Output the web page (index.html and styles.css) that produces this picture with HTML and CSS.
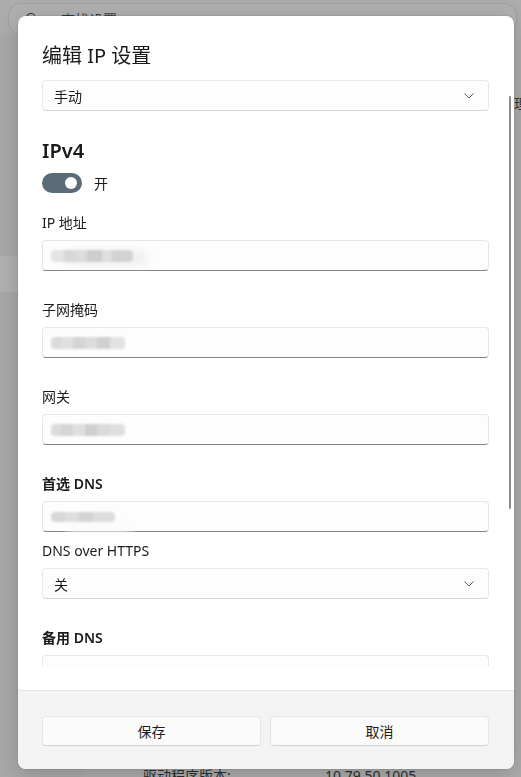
FILE: index.html
```html
<!DOCTYPE html>
<html lang="zh-CN">
<head>
<meta charset="utf-8">
<title>编辑 IP 设置</title>
<link rel="stylesheet" href="styles.css">
</head>
<body>
<div class="page">
  <div class="search">
    <svg class="search-icon" width="14" height="14" viewBox="0 0 14 14"><circle cx="8" cy="6" r="4.5" fill="none" stroke="#3a3a3a" stroke-width="1.2"/><path d="M4.8 9.2 1.5 12.5" stroke="#3a3a3a" stroke-width="1.2"/></svg>
    <span>查找设置</span>
  </div>
  <div class="page-body">
    <div class="nav"><div class="nav-sel"></div></div>
    <div class="main">
      <div class="side-row">理代理</div>
      <div class="driver"><span class="driver-key">驱动程序版本:</span><span>10.79.50.1005</span></div>
    </div>
  </div>
</div>

<div class="dialog">
  <div class="scroll">
    <div class="scroll-inner">
      <h1 class="title">编辑 IP 设置</h1>
      <div class="select first-select"><span>手动</span><svg class="chev" width="10" height="6" viewBox="0 0 10 6"><path d="M0.5 0.5 5 5 9.5 0.5" fill="none" stroke="#5c5c5c" stroke-width="1"/></svg></div>

      <h2 class="section">IPv4</h2>
      <div class="toggle-row"><span class="toggle"><span class="knob"></span></span><span>开</span></div>

      <div class="field first-field">
        <label class="label">IP 地址</label>
        <div class="input"><span class="redact r-ip"></span></div>
      </div>
      <div class="field">
        <label class="label">子网掩码</label>
        <div class="input"><span class="redact r-mask"></span></div>
      </div>
      <div class="field">
        <label class="label">网关</label>
        <div class="input"><span class="redact r-gw"></span></div>
      </div>
      <div class="field">
        <label class="label strong">首选 DNS</label>
        <div class="input"><span class="redact r-dns"></span></div>
      </div>
      <div class="field tight">
        <label class="label">DNS over HTTPS</label>
        <div class="select"><span>关</span><svg class="chev" width="10" height="6" viewBox="0 0 10 6"><path d="M0.5 0.5 5 5 9.5 0.5" fill="none" stroke="#5c5c5c" stroke-width="1"/></svg></div>
      </div>
      <div class="field">
        <label class="label strong">备用 DNS</label>
        <div class="input"></div>
      </div>
    </div>
    <div class="scrollbar"></div>
  </div>
  <div class="footer">
    <button class="btn">保存</button>
    <button class="btn">取消</button>
  </div>
</div>
</body>
</html>
```

FILE: styles.css
```css
* { box-sizing: border-box; }

body {
  margin: 0;
  width: 521px;
  height: 777px;
  overflow: hidden;
  background: #acacac;
  font-family: "Segoe UI", "Noto Sans", "Noto Sans CJK SC", sans-serif;
  color: #1b1b1b;
}

/* dimmed settings window behind */
.page {
  height: 777px;
  display: flex;
  flex-direction: column;
}

.search {
  margin: 3px 4px 0 8px;
  height: 32px;
  border: 1px solid #a0a0a0;
  border-radius: 13px;
  background: #b0b0b0;
  display: flex;
  align-items: center;
  gap: 24px;
  padding-left: 14px;
  font-size: 14px;
  color: #3a3a3a;
}

.page-body {
  flex: 1;
  display: flex;
}

.nav {
  width: 83px;
  background: #a9a9a9;
  padding-top: 221px;
}

.nav-sel {
  height: 36px;
  background: #b1b1b1;
}

.main {
  flex: 1;
  display: flex;
  flex-direction: column;
  overflow: hidden;
}

.side-row {
  margin-top: 59px;
  padding-left: 431px;
  font-size: 14px;
  line-height: 20px;
  color: #333;
  white-space: nowrap;
}

.driver {
  margin-top: auto;
  margin-bottom: -9px;
  display: flex;
  padding-left: 60px;
  font-size: 14px;
  line-height: 20px;
  color: #2e2e2e;
  white-space: nowrap;
}

.driver-key { width: 182px; }

/* dialog */
.dialog {
  position: fixed;
  left: 18px;
  top: 16px;
  width: 496px;
  height: 753px;
  background: #ffffff;
  border-radius: 8px;
  display: flex;
  flex-direction: column;
  overflow: hidden;
  box-shadow: 0 6px 24px rgba(0, 0, 0, 0.18), 0 0 0 1px rgba(0, 0, 0, 0.06);
}

.scroll {
  position: relative;
  flex: 1;
  min-height: 0;
  padding-bottom: 24px;
  display: flex;
  flex-direction: column;
}

.scroll-inner {
  flex: 1;
  min-height: 0;
  overflow: hidden;
  padding: 26px 25px 0 24px;
  display: flex;
  flex-direction: column;
}

.title {
  margin: 0;
  font-size: 20px;
  line-height: 28px;
  font-weight: 400;
  color: #1a1a1a;
}

.select {
  height: 31px;
  flex-shrink: 0;
  border: 1px solid #e8e8e8;
  border-bottom-color: #d6d6d6;
  border-radius: 4px;
  background: #fdfdfd;
  display: flex;
  align-items: center;
  justify-content: space-between;
  padding: 0 14px 0 11px;
  font-size: 14px;
  color: #1b1b1b;
}

.first-select { margin-top: 10px; }

.chev { display: block; }

.section {
  margin: 26px 0 0;
  font-size: 20px;
  line-height: 28px;
  font-weight: 600;
  color: #1a1a1a;
}

.toggle-row {
  margin-top: 8px;
  height: 20px;
  flex-shrink: 0;
  display: flex;
  align-items: center;
  gap: 12px;
  font-size: 14px;
}

.toggle {
  width: 40px;
  height: 20px;
  border-radius: 10px;
  background: #5b6c79;
  display: flex;
  align-items: center;
  justify-content: flex-end;
  padding-right: 5px;
}

.knob {
  width: 12px;
  height: 12px;
  border-radius: 50%;
  background: #ffffff;
}

.field {
  margin-top: 29px;
  flex-shrink: 0;
  display: flex;
  flex-direction: column;
  gap: 7px;
}

.first-field { margin-top: 20px; }
.tight { margin-top: 9px; }

.label {
  font-size: 14px;
  line-height: 20px;
  color: #1b1b1b;
}

.label.strong { font-weight: 600; }

.input {
  height: 31px;
  flex-shrink: 0;
  border: 1px solid #e6e6e6;
  border-bottom-color: #868686;
  border-radius: 4px;
  background: #fdfdfd;
  display: flex;
  align-items: center;
  padding-left: 8px;
}

.redact {
  display: block;
  height: 12px;
  filter: blur(0.8px);
  border-radius: 4px;
}

.r-ip {
  width: 82px;
  background: linear-gradient(to right, #e4e4e4 0 16%, #d7d7d7 16% 30%, #dcdcdc 30% 44%, #cdcdcd 44% 62%, #dedede 62% 74%, #d2d2d2 74% 100%);
  box-shadow: 14px 2px 8px rgba(235, 235, 235, 0.9);
}

.r-mask {
  width: 74px;
  background: linear-gradient(to right, #dadada 0 14%, #e0e0e0 14% 30%, #d4d4d4 30% 46%, #dcdcdc 46% 62%, #d0d0d0 62% 80%, #e2e2e2 80% 100%);
}

.r-gw {
  width: 74px;
  background: linear-gradient(to right, #dcdcdc 0 14%, #d6d6d6 14% 30%, #e0e0e0 30% 46%, #cfcfcf 46% 62%, #dadada 62% 80%, #dfdfdf 80% 100%);
}

.r-dns {
  width: 64px;
  height: 10px;
  background: linear-gradient(to right, #d8d8d8 0 22%, #dedede 22% 44%, #d3d3d3 44% 66%, #dcdcdc 66% 100%);
  box-shadow: 16px 10px 8px rgba(250, 250, 250, 1);
}

.scrollbar {
  position: absolute;
  left: 491px;
  top: 80px;
  width: 2px;
  height: 413px;
  border-radius: 1px;
  background: #8b8b8b;
}

.footer {
  height: 79px;
  flex-shrink: 0;
  background: #f3f3f3;
  border-top: 1px solid #e5e5e5;
  padding: 25px 25px 0 24px;
  display: grid;
  grid-template-columns: 1fr 1fr;
  column-gap: 9px;
  align-items: start;
}

.btn {
  height: 30px;
  border: 1px solid #e5e5e5;
  border-bottom-color: #d2d2d2;
  border-radius: 4px;
  background: #fbfbfb;
  font-family: inherit;
  font-size: 14px;
  color: #1b1b1b;
  padding: 0;
}
```
